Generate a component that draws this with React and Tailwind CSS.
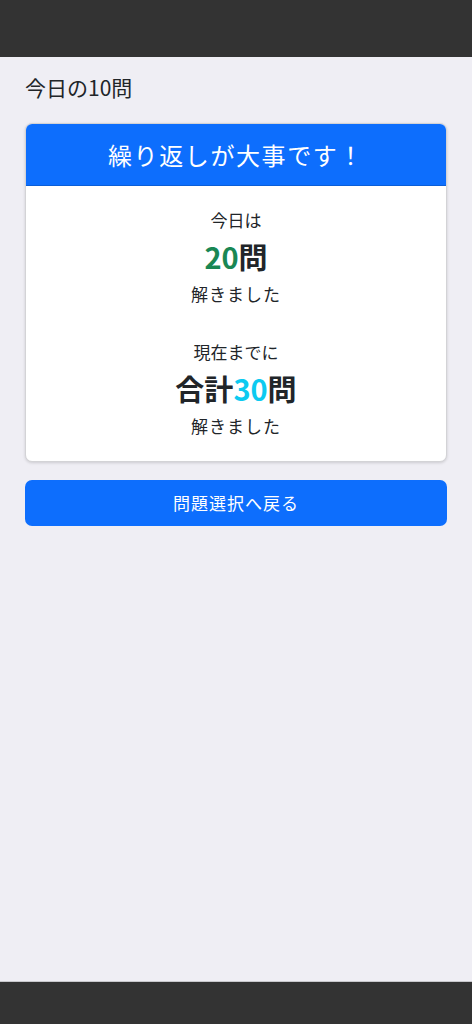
import React from 'react';

const font = { fontFamily: '"Noto Sans CJK JP", "Noto Sans", sans-serif' };

function StatBlock({ label, children, className = '' }) {
  return (
    <div className={`flex flex-col items-center ${className}`}>
      <p className="text-[17px] leading-[28px] text-[#212529]">{label}</p>
      <p className="mt-[2px] text-[29px] leading-[40px] font-bold text-[#212529]">{children}</p>
      <p className="mt-[4px] text-[17px] leading-[28px] tracking-[1px] text-[#212529]">解きました</p>
    </div>
  );
}

export default function App() {
  return (
    <div className="flex h-screen flex-col bg-[#efeef4]" style={font}>
      <div className="h-[57px] shrink-0 bg-[#333333]" />

      <main className="flex-1 px-[25px] pt-[15px]">
        <h1 className="text-[21px] leading-[30px] text-[#212529]">今日の10問</h1>

        <div className="mt-[21px] overflow-hidden rounded-[7px] border border-[#d3d3d6] bg-white shadow-[0_1px_3px_rgba(0,0,0,0.15)]">
          <div className="flex h-[62px] items-center justify-center border-b border-[#0b5ed7] bg-[#0d6efd]">
            <span className="text-[24px] tracking-[1.6px] text-white">繰り返しが大事です！</span>
          </div>
          <div className="flex flex-col pt-[20px] pb-[21px]">
            <StatBlock label="今日は">
              <span className="text-[#198754]">20</span>問
            </StatBlock>
            <StatBlock label="現在までに" className="mt-[30px]">
              合計<span className="text-[#0dcaf0]">30</span>問
            </StatBlock>
          </div>
        </div>

        <button className="mt-[18px] flex h-[46px] w-full items-center justify-center rounded-[7px] bg-[#0d6efd] text-[17px] tracking-[1px] text-white">
          問題選択へ戻る
        </button>
      </main>

      <div className="h-[43px] shrink-0 border-t border-[#c8c8cc] bg-[#333333]" />
    </div>
  );
}
